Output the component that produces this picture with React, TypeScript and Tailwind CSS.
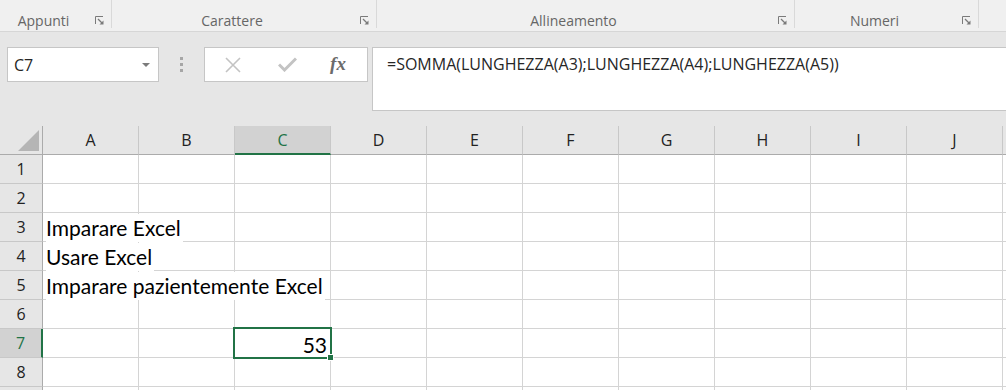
const columns = ["A", "B", "C", "D", "E", "F", "G", "H", "I", "J"];

const cellText: Record<string, string> = {
  A3: "Imparare Excel",
  A4: "Usare Excel",
  A5: "Imparare pazientemente Excel",
};

const groups = [
  { label: "Appunti", width: "w-[111px]" },
  { label: "Carattere", width: "w-[264px]" },
  { label: "Allineamento", width: "w-[417px]" },
  { label: "Numeri", width: "w-[183px]" },
];

function Launcher() {
  return (
    <svg width="9" height="9" viewBox="0 0 9 9" className="text-[#7a7a7a]">
      <path d="M0.5 8 V0.5 H8" fill="none" stroke="currentColor" strokeWidth="1" />
      <path d="M3 3 L7 7" stroke="currentColor" strokeWidth="1.2" />
      <path d="M8.5 4.5 V8.5 H4.5 Z" fill="currentColor" />
    </svg>
  );
}

function Ribbon() {
  return (
    <div className="flex items-start h-[32px] bg-[#f0f0f0] border-b border-[#d6d6d6]">
      {groups.map((g) => (
        <div key={g.label} className="flex items-start shrink-0">
          <div className={`${g.width} flex h-[31px]`}>
            <div className="flex-1 flex items-end justify-center text-[14px] leading-[20px] text-[#666666]">
              {g.label}
            </div>
            <div className="w-[24px] flex items-end justify-center pb-[6px]">
              <Launcher />
            </div>
          </div>
          <div className="w-px h-[28px] bg-[#d9d9d9]" />
        </div>
      ))}
    </div>
  );
}

function FormulaBar() {
  return (
    <div className="flex items-start h-[94px] bg-[#e6e6e6] pt-[15px]">
      <div className="ml-[7px] w-[152px] h-[35px] bg-white border border-[#c6c6c6] flex items-center pl-[6px] pr-[8px]">
        <span className="flex-1 text-[16px] text-[#262626]">C7</span>
        <svg width="8" height="4" viewBox="0 0 8 4">
          <path d="M0 0 H8 L4 4 Z" fill="#7b7b7b" />
        </svg>
      </div>
      <div className="w-[45px] h-[35px] flex flex-col items-center justify-center gap-[3px]">
        <span className="w-[3px] h-[3px] bg-[#a6a6a6]" />
        <span className="w-[3px] h-[3px] bg-[#a6a6a6]" />
        <span className="w-[3px] h-[3px] bg-[#a6a6a6]" />
      </div>
      <div className="w-[164px] h-[35px] bg-white border border-[#c6c6c6] flex items-center">
        <div className="w-[55px] flex justify-center">
          <svg width="16" height="16" viewBox="0 0 16 16">
            <path d="M1 1 L15 15 M15 1 L1 15" stroke="#c3c3c3" strokeWidth="1.6" />
          </svg>
        </div>
        <div className="w-[55px] flex justify-center">
          <svg width="19" height="15" viewBox="0 0 19 15">
            <path d="M1 7.5 L6.5 13 L18 1.5" fill="none" stroke="#c3c3c3" strokeWidth="3" />
          </svg>
        </div>
        <div className="flex-1 flex justify-center pr-[6px] text-[19px] italic font-bold text-[#6b6b6b] font-['Liberation_Serif',serif]">
          fx
        </div>
      </div>
      <div className="ml-[4px] flex-1 h-[64px] bg-white border border-r-0 border-[#c6c6c6] pl-[14px] pt-[4px] text-[16px] text-[#262626]">
        =SOMMA(LUNGHEZZA(A3);LUNGHEZZA(A4);LUNGHEZZA(A5))
      </div>
    </div>
  );
}

function HeaderRow() {
  return (
    <div className="flex h-[29px] bg-[#e6e6e6]">
      <div className="w-[43px] shrink-0 border-r border-b border-[#ababab] flex items-end justify-end pr-[3px] pb-[3px]">
        <svg width="21" height="21" viewBox="0 0 21 21">
          <path d="M21 0 V21 H0 Z" fill="#b5b5b5" />
        </svg>
      </div>
      {columns.map((c) => {
        const selected = c === "C";
        return (
          <div
            key={c}
            className={
              selected
                ? "w-[96px] shrink-0 flex items-center justify-center bg-[#d2d2d2] border-r border-[#c8c8c8] border-b-2 border-b-[#217346] text-[#217346] text-[16px]"
                : "w-[96px] shrink-0 flex items-center justify-center border-r border-[#c8c8c8] border-b border-b-[#ababab] text-[#222222] text-[16px]"
            }
          >
            {c}
          </div>
        );
      })}
      <div className="flex-1 border-b border-[#ababab]" />
    </div>
  );
}

function Row({ n }: { n: number }) {
  const selected = n === 7;
  return (
    <div className="flex h-[29px]">
      <div
        className={
          selected
            ? "w-[43px] shrink-0 flex items-center justify-center bg-[#d2d2d2] border-r-2 border-r-[#217346] border-b border-b-[#c8c8c8] text-[#217346] text-[16px]"
            : "w-[43px] shrink-0 flex items-center justify-center bg-[#e6e6e6] border-r border-r-[#ababab] border-b border-b-[#c8c8c8] text-[#222222] text-[16px]"
        }
      >
        {n < 9 ? n : ""}
      </div>
      {columns.map((c) => {
        const key = `${c}${n}`;
        const text = cellText[key];
        const active = key === "C7";
        return (
          <div
            key={key}
            className="relative w-[96px] shrink-0 border-r border-b border-[#d4d4d4] flex items-center"
          >
            {text && (
              <span className="absolute left-[3px] top-[1px] whitespace-nowrap text-[21px] leading-[28px] text-black font-['Lato',sans-serif] z-[1] bg-white pr-[2px]">
                {text}
              </span>
            )}
            {active && (
              <>
                <span className="ml-auto pr-[3px] pt-[2px] text-[21px] leading-[27px] text-black font-['Lato',sans-serif]">53</span>
                <div className="absolute -left-[2px] -top-[2px] -right-[2px] -bottom-[2px] border-2 border-[#217346] z-10">
                  <div className="absolute -right-[4px] -bottom-[4px] w-[7px] h-[7px] bg-[#217346] border border-white" />
                </div>
              </>
            )}
          </div>
        );
      })}
      <div className="flex-1 border-b border-[#d4d4d4]" />
    </div>
  );
}

export default function App() {
  return (
    <div className="w-[1006px] h-[390px] overflow-hidden bg-white font-['Open_Sans',sans-serif]">
      <Ribbon />
      <FormulaBar />
      <HeaderRow />
      {[1, 2, 3, 4, 5, 6, 7, 8, 9].map((n) => (
        <Row key={n} n={n} />
      ))}
    </div>
  );
}
